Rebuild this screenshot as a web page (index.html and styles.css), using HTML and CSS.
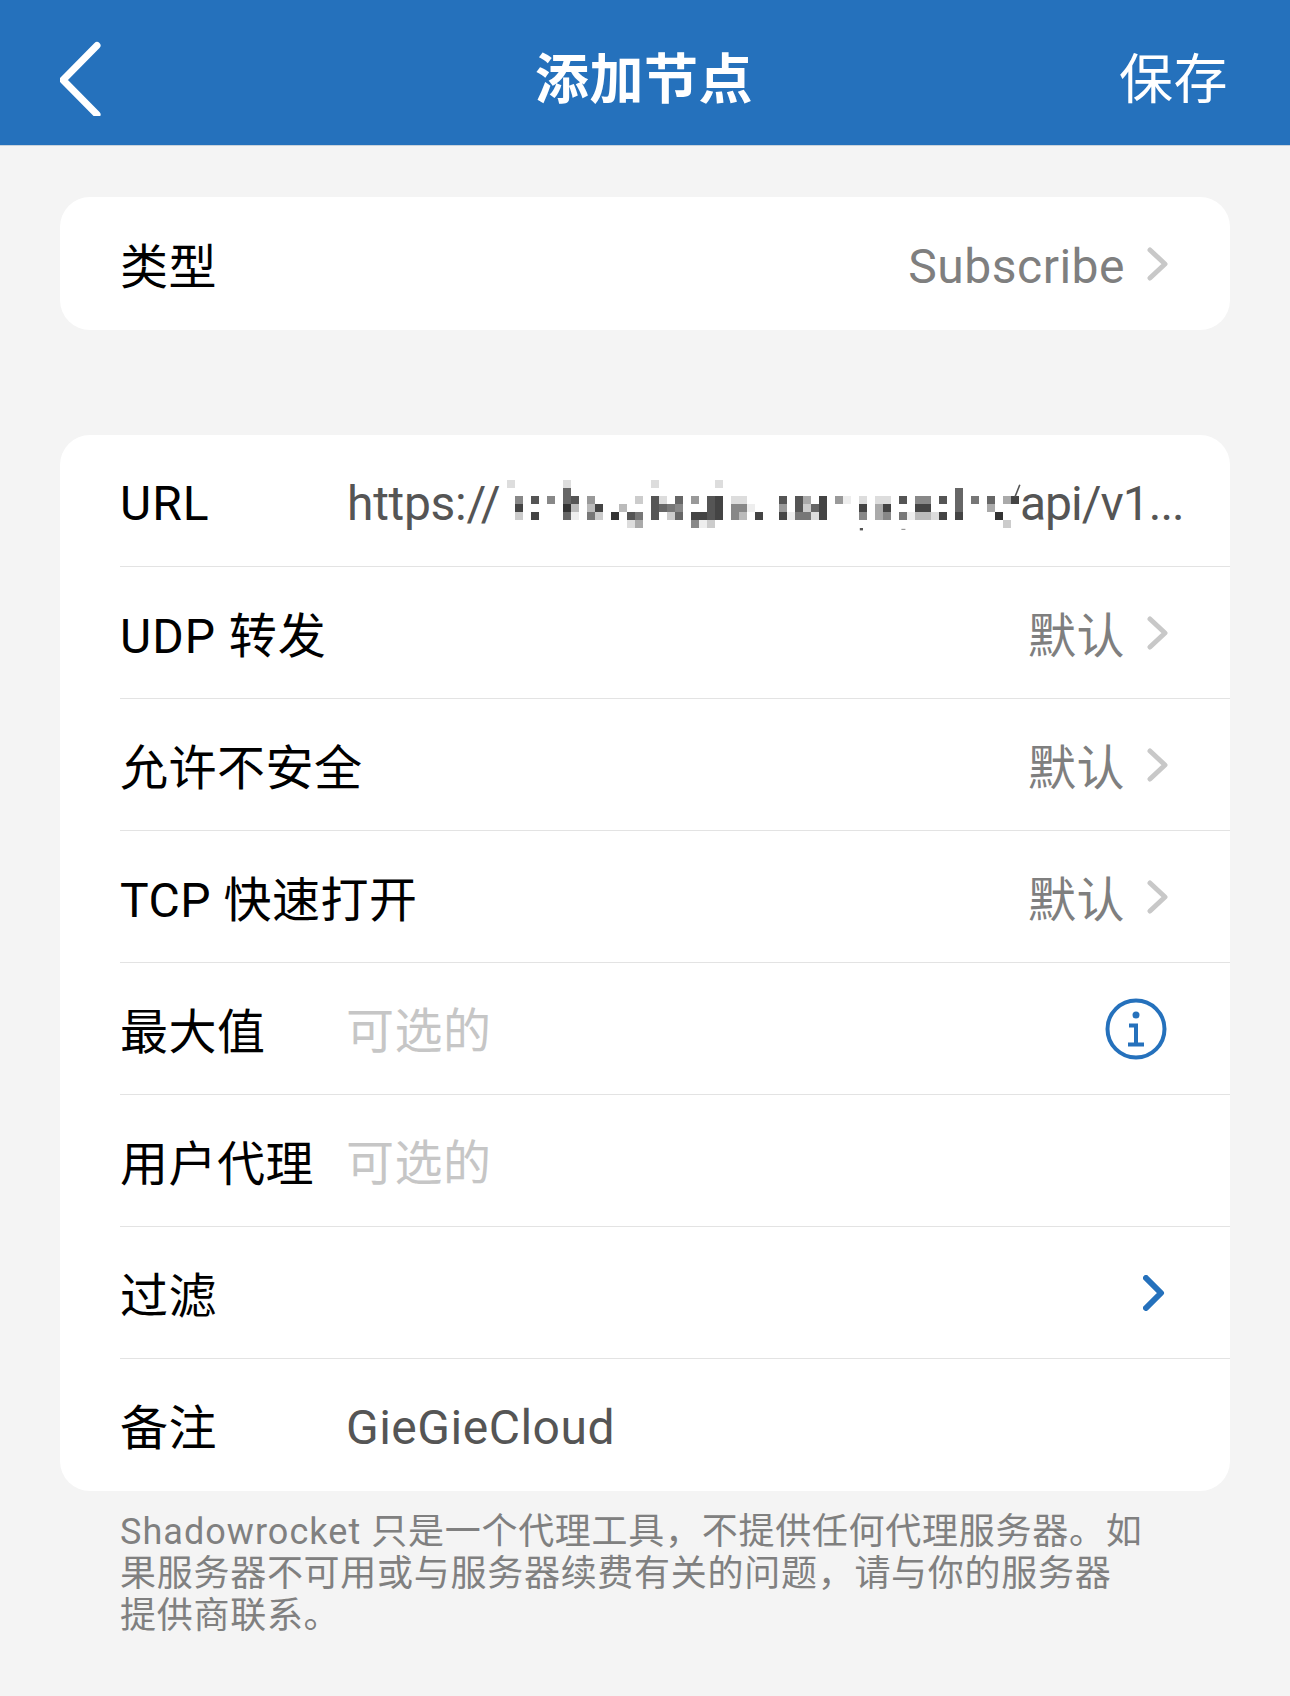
FILE: index.html
```html
<!DOCTYPE html>
<html>
<head>
    <title>添加节点</title>
    <link rel="stylesheet" href="styles.css">
</head>
<body>

    <header class="nav">
        <svg class="nav-back" width="44" height="80" viewBox="0 0 44 80">
            <path d="M37 9.500 L3 44 L37 78.500"/>
        </svg>
        <h1 class="nav-title">添加节点</h1>
        <span class="nav-save">保存</span>
    </header>

    <section class="card card-type">
        <div class="row">
            <span class="label">类型</span>
            <span class="value-right latin">Subscribe</span>
            <svg class="chev" width="22" height="34" viewBox="0 0 22 34"><path d="M3 3 L18 17 L3 31"/></svg>
        </div>
    </section>

    <section class="card">
        <div class="row">
            <span class="label label-wide latin">URL</span>
            <div class="value url">
                <span class="url-head latin">https://</span>
                <!-- blurred part of the address -->
                <svg class="mosaic" width="520" height="56" viewBox="0 0 65 7">
                    <g shape-rendering="crispEdges">
                        <path fill="#333" d="M7 3h1v1h-1zM13 4h1v1h-1zM61 4h1v1h-1z"/>
                        <path fill="#444" d="M1 3h1v1h-1zM3 4h1v1h-1zM23 4h2v1h-2zM26 2h1v3h-1zM11 3h1v1h-1zM31 4h1v1h-1zM39 2h1v3h-1zM34 4h1v1h-1zM44 3h1v1h-1zM47 3h1v1h-1zM51 3h2v1h-2zM54 4h1v1h-1zM56 4h1v1h-1zM63 2h1v1h-1z"/>
                        <path fill="#555" d="M3 2h1v1h-1zM8 2h1v1h-1zM18 2h1v3h-1zM15 4h1v1h-1zM25 2h1v3h-1zM34 2h1v1h-1zM36 2h1v2h-1zM49 2h1v1h-1zM54 2h1v1h-1z"/>
                        <path fill="#666" d="M7 1h1v2h-1zM7 4h1v1h-1zM21 2h1v1h-1zM21 4h1v1h-1zM19 3h1v1h-1zM38 3h1v1h-1zM56 1h1v3h-1zM60 2h1v1h-1z"/>
                        <path fill="#777" d="M20 3h1v1h-1zM10 4h1v1h-1zM16 4h1v1h-1zM36 4h2v1h-2zM49 4h1v1h-1zM58 2h1v1h-1z"/>
                        <path fill="#888" d="M1 2h1v1h-1zM5 2h1v1h-1zM21 3h1v1h-1zM28 3h2v1h-2zM28 4h1v1h-1zM23 5h1v1h-1zM51 2h2v1h-2zM44 4h1v1h-1zM47 4h1v1h-1z"/>
                        <path fill="#999" d="M10 2h1v1h-1zM23 2h1v1h-1zM34 3h1v1h-1zM41 2h1v1h-1z"/>
                        <path fill="#aaa" d="M16 5h1v1h-1zM37 2h1v1h-1zM46 3h1v2h-1zM60 3h1v1h-1zM62 2h1v1h-1z"/>
                        <path fill="#bbb" d="M8 3h1v1h-1zM10 3h1v1h-1zM14 3h1v1h-1zM29 4h1v1h-1zM51 4h2v1h-2z"/>
                        <path fill="#ccc" d="M1 4h1v1h-1zM11 4h1v1h-1zM16 2h1v1h-1zM20 4h1v1h-1zM25 5h1v1h-1zM37 3h1v1h-1zM62 5h1v1h-1z"/>
                        <path fill="#ddd" d="M0 0h1v1h-1zM7 0h1v1h-1zM18 0h1v1h-1zM26 0h1v1h-1zM19 2h1v1h-1zM28 2h2v1h-2zM15 5h1v1h-1zM44 2h1v1h-1zM46 2h2v1h-2zM38 4h1v1h-1zM53 4h1v1h-1z"/>
                        <path fill="#eee" d="M8 4h1v1h-1zM24 5h1v1h-1zM30 3h1v1h-1zM42 2h1v1h-1zM35 4h1v1h-1zM50 4h1v1h-1z"/>
                    </g>
                    <path class="mosaic-slash" d="M64.100 .600 L63.500 2.100"/>
                    <path fill="#555" d="M44.100 6h.400v.300h-.400z"/>
                    <path fill="#999" d="M49.300 6.100h.500v.150h-.500z"/>
                </svg>
                <span class="url-tail latin">api/v1...</span>
            </div>
        </div>
        <div class="row">
            <span class="label label-wide">UDP 转发</span>
            <span class="value-right">默认</span>
            <svg class="chev" width="22" height="34" viewBox="0 0 22 34"><path d="M3 3 L18 17 L3 31"/></svg>
        </div>
        <div class="row">
            <span class="label">允许不安全</span>
            <span class="value-right">默认</span>
            <svg class="chev" width="22" height="34" viewBox="0 0 22 34"><path d="M3 3 L18 17 L3 31"/></svg>
        </div>
        <div class="row">
            <span class="label">TCP 快速打开</span>
            <span class="value-right">默认</span>
            <svg class="chev" width="22" height="34" viewBox="0 0 22 34"><path d="M3 3 L18 17 L3 31"/></svg>
        </div>
        <div class="row">
            <span class="label">最大值</span>
            <span class="value placeholder">可选的</span>
            <svg class="info" width="62" height="62" viewBox="0 0 62 62">
                <circle cx="31" cy="31" r="28.500"/>
                <circle class="info-dot" cx="31" cy="17" r="3.500"/>
                <path d="M24 27.500 H31 V46.500 M23 46.500 H39"/>
            </svg>
        </div>
        <div class="row">
            <span class="label">用户代理</span>
            <span class="value placeholder">可选的</span>
        </div>
        <div class="row">
            <span class="label">过滤</span>
            <svg class="chev chev-blue" width="22" height="36" viewBox="0 0 22 36"><path d="M3 3 L18 18 L3 33"/></svg>
        </div>
        <div class="row">
            <span class="label">备注</span>
            <span class="value latin">GieGieCloud</span>
        </div>
    </section>

    <p class="note">
        <span class="note-app">Shadowrocket </span>只是一个代理工具，不提供任何代理服务器。如<br>
        果服务器不可用或与服务器续费有关的问题，请与你的服务器<br>
        提供商联系。
    </p>

</body>
</html>
```

FILE: styles.css
```css
body {
    margin: 0;
    background-color: #f4f4f4;
    font-family: Roboto, "Noto Sans CJK SC", sans-serif;
    color: #000;
}

.nav {
    display: grid;
    grid-template-columns: 1fr auto 1fr;
    align-items: center;
    height: 139px;
    padding: 6px 62px 0 60px;
    background-color: #2571bc;
    border-bottom: 1px solid #c9d3dc;
}

.nav-back {
    fill: none;
    stroke: #fff;
    stroke-width: 7;
    stroke-linecap: round;
    stroke-linejoin: round;
}

.nav-title {
    margin: 0;
    font-size: 54px;
    letter-spacing: 0.5px;
    font-weight: 700;
    color: #fff;
}

.nav-save {
    justify-self: end;
    font-size: 54px;
    letter-spacing: 0.5px;
    color: #fff;
}

.card {
    margin: 0 60px;
    background-color: #fff;
    border-radius: 30px;
    overflow: hidden;
}

.card-type {
    margin-top: 51px;
    margin-bottom: 105px;
}

.row {
    display: flex;
    align-items: center;
    height: 131px;
    margin-left: 60px;
    padding-right: 61px;
    border-bottom: 1px solid #e3e3e3;
    font-size: 48px;
    letter-spacing: 0.5px;
}

.row:last-child {
    height: 132px;
    border-bottom: none;
}

.card-type .row {
    height: 133px;
}

.label {
    flex: 0 0 226px;
    padding-bottom: 2px;
    white-space: nowrap;
}

.label-wide {
    letter-spacing: 1px;
}

.value {
    flex: 1;
    color: #555;
    white-space: nowrap;
}

.placeholder {
    padding-bottom: 3px;
    color: #c6c6c6;
}

.url {
    display: flex;
    align-items: center;
}

.url-head {
    flex: 0 0 161px;
    box-sizing: border-box;
    padding-left: 1px;
    letter-spacing: -0.3px;
}

.mosaic {
    flex: none;
    margin-top: 14px;
}

.mosaic-slash {
    fill: none;
    stroke: #555;
    stroke-width: 0.200;
}

.url-tail {
    margin-left: -7px;
    letter-spacing: -1px;
}

.value-right {
    margin-left: auto;
    padding-bottom: 2px;
    color: #7f7f7f;
}

/* latin glyphs sit a bit lower than the cjk ones */
.latin {
    padding-top: 5px;
    padding-bottom: 0;
}

.chev {
    flex: none;
    margin-left: 22px;
    fill: none;
    stroke: #c8c8c8;
    stroke-width: 5;
    stroke-linecap: round;
    stroke-linejoin: round;
}

.chev-blue {
    margin-left: auto;
    margin-right: 4px;
    stroke: #2571bc;
    stroke-width: 6;
}

.info {
    flex: none;
    margin-right: 2px;
    fill: none;
    stroke: #2571bc;
    stroke-width: 4;
}

.info-dot {
    fill: #2571bc;
    stroke: none;
}

.note {
    margin: 20px 60px 0;
    padding-left: 60px;
    font-size: 36px;
    letter-spacing: 0.72px;
    line-height: 42px;
    color: #808080;
    white-space: nowrap;
}

.note-app {
    letter-spacing: 1.05px;
}
```
